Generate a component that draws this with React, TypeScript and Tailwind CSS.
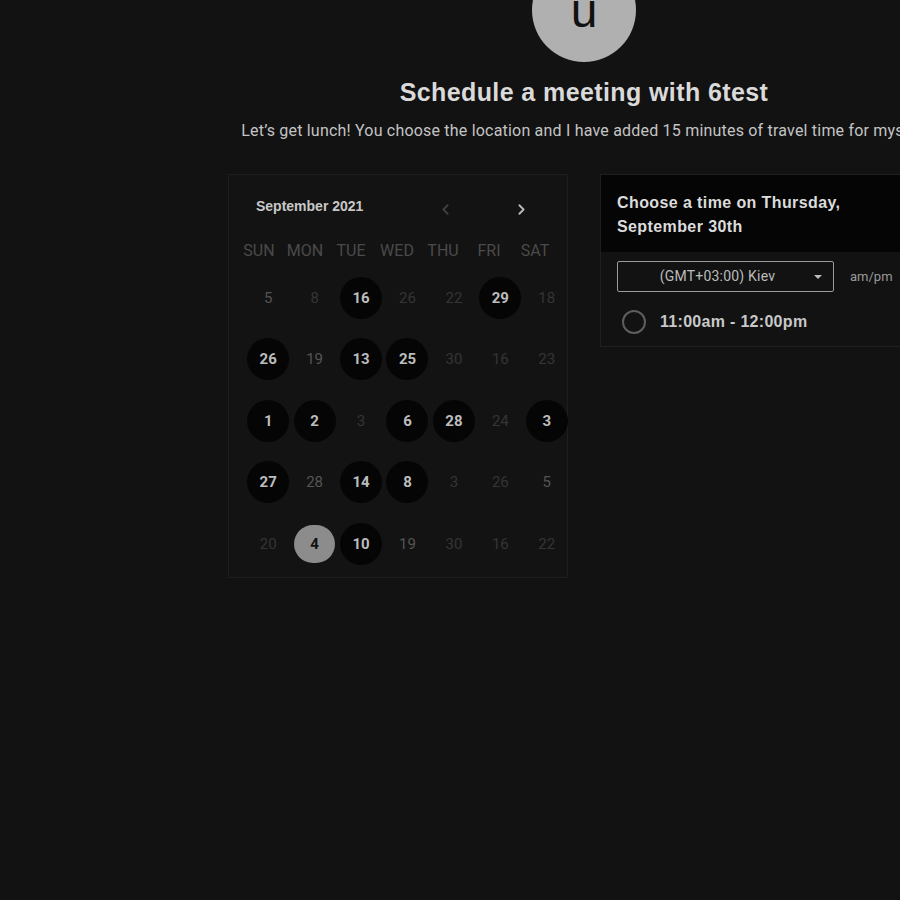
import { ChevronLeft, ChevronRight } from "lucide-react";

type Day = { n: number; kind: "dot" | "sel" | "mid" | "dim" };

const weekdays = ["SUN", "MON", "TUE", "WED", "THU", "FRI", "SAT"];

const rows: Day[][] = [
  [
    { n: 5, kind: "mid" },
    { n: 8, kind: "dim" },
    { n: 16, kind: "dot" },
    { n: 26, kind: "dim" },
    { n: 22, kind: "dim" },
    { n: 29, kind: "dot" },
    { n: 18, kind: "dim" },
  ],
  [
    { n: 26, kind: "dot" },
    { n: 19, kind: "mid" },
    { n: 13, kind: "dot" },
    { n: 25, kind: "dot" },
    { n: 30, kind: "dim" },
    { n: 16, kind: "dim" },
    { n: 23, kind: "dim" },
  ],
  [
    { n: 1, kind: "dot" },
    { n: 2, kind: "dot" },
    { n: 3, kind: "dim" },
    { n: 6, kind: "dot" },
    { n: 28, kind: "dot" },
    { n: 24, kind: "dim" },
    { n: 3, kind: "dot" },
  ],
  [
    { n: 27, kind: "dot" },
    { n: 28, kind: "mid" },
    { n: 14, kind: "dot" },
    { n: 8, kind: "dot" },
    { n: 3, kind: "dim" },
    { n: 26, kind: "dim" },
    { n: 5, kind: "mid" },
  ],
  [
    { n: 20, kind: "dim" },
    { n: 4, kind: "sel" },
    { n: 10, kind: "dot" },
    { n: 19, kind: "mid" },
    { n: 30, kind: "dim" },
    { n: 16, kind: "dim" },
    { n: 22, kind: "dim" },
  ],
];

function DayCell({ day }: { day: Day }) {
  if (day.kind === "dot") {
    return (
      <div className="flex h-[42px] w-[42px] items-center justify-center rounded-full bg-[#050505] text-[15px] font-bold text-[#bdbdbd]">
        {day.n}
      </div>
    );
  }
  if (day.kind === "sel") {
    return (
      <div className="flex h-[38px] w-[41px] items-center justify-center rounded-full bg-[#8c8c8c] text-[15px] font-bold text-[#111]">
        {day.n}
      </div>
    );
  }
  return (
    <span className={day.kind === "mid" ? "text-[15px] text-[#555]" : "text-[15px] text-[#353535]"}>{day.n}</span>
  );
}

function Calendar() {
  return (
    <div className="h-[404px] w-[340px] shrink-0 border border-[#1e1e1e] bg-[#131313] font-['Roboto',sans-serif]">
      <div className="flex h-[63px] items-center">
        <span className="ml-[27px] font-['Liberation_Sans',sans-serif] text-[14px] font-bold text-[#c8c8c8]">
          September 2021
        </span>
        <ChevronLeft className="ml-[74px] mt-[6px] h-[17px] w-[17px] text-[#3f3f3f]" strokeWidth={2.5} />
        <ChevronRight className="ml-[59px] mt-[6px] h-[17px] w-[17px] text-[#bbb]" strokeWidth={2.5} />
      </div>
      <div className="grid h-[26px] w-[329px] grid-cols-7 pl-[7px]">
        {weekdays.map((w) => (
          <div key={w} className="flex items-center justify-center text-[16px] text-[#4a4a4a]">
            {w}
          </div>
        ))}
      </div>
      <div className="mt-[3px] w-[341px] pl-[16px]">
        {rows.map((row, i) => (
          <div key={i} className="grid h-[61.5px] grid-cols-7">
            {row.map((d, j) => (
              <div key={j} className="flex items-center justify-center">
                <DayCell day={d} />
              </div>
            ))}
          </div>
        ))}
      </div>
    </div>
  );
}

function TimePanel() {
  return (
    <div className="h-[173px] w-[340px] shrink-0 border border-[#1f1f1f] bg-[#121212]">
      <div className="h-[77px] bg-[#050505] px-[16px] pt-[16px] font-['Liberation_Sans',sans-serif] text-[16px] font-bold leading-[24px] tracking-[0.4px] text-[#dcdcdc]">
        Choose a time on Thursday,
        <br />
        September 30th
      </div>
      <div className="mt-[9px] flex items-center px-[16px]">
        <div className="relative flex h-[31px] w-[217px] items-center justify-center rounded-[2px] border border-[#9a9a9a] font-['Roboto',sans-serif] text-[14px] tracking-[0.2px] text-[#bbb]">
          <span className="-ml-[16px]">(GMT+03:00) Kiev</span>
          <span className="absolute right-[11px] top-[13px] h-0 w-0 border-x-[4px] border-t-[4px] border-x-transparent border-t-[#bbb]" />
        </div>
        <span className="ml-[16px] font-['Roboto',sans-serif] text-[13px] text-[#9a9a9a]">am/pm</span>
      </div>
      <div className="mt-[18px] flex items-center pl-[21px]">
        <span className="h-[24px] w-[24px] rounded-full border-2 border-[#5e5e5e]" />
        <span className="ml-[14px] font-['Liberation_Sans',sans-serif] text-[16px] font-bold tracking-[0.3px] text-[#c8c8c8]">
          11:00am - 12:00pm
        </span>
      </div>
    </div>
  );
}

export default function App() {
  return (
    <div className="h-[900px] w-full overflow-hidden bg-[#121212]">
      <div className="flex w-[1168px] flex-col items-center">
        <div className="-mt-[42px] flex h-[104px] w-[104px] items-center justify-center rounded-full bg-[#b0b0b0]">
          <span className="mt-[2px] font-['Liberation_Sans',sans-serif] text-[48px] leading-none text-[#111]">u</span>
        </div>
        <h1 className="mt-[15px] font-['Liberation_Sans',sans-serif] text-[25px] font-bold leading-[30px] tracking-[0.4px] text-[#dadada]">
          Schedule a meeting with 6test
        </h1>
        <p className="mt-[12px] whitespace-nowrap font-['Roboto',sans-serif] text-[16px] tracking-[0.2px] text-[#c4c4c4]">
          Let’s get lunch! You choose the location and I have added 15 minutes of travel time for myself.
        </p>
        <div className="mt-[31px] flex gap-[32px]">
          <Calendar />
          <TimePanel />
        </div>
      </div>
    </div>
  );
}
